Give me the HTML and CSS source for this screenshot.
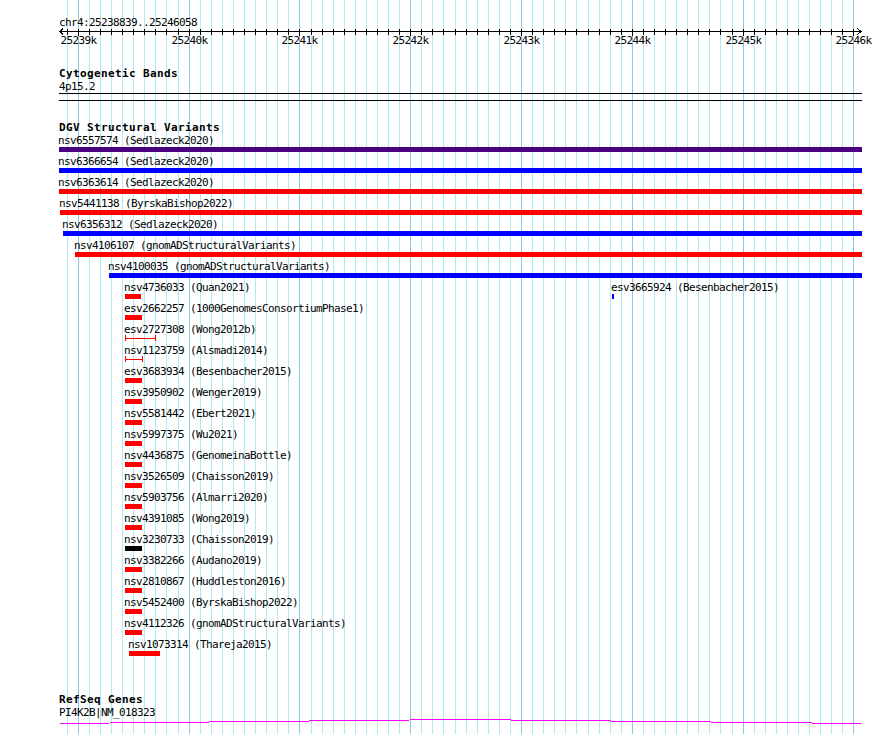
FILE: index.html
```html
<!DOCTYPE html>
<html lang="en">
<head>
    <meta charset="UTF-8">
    <title>chr4:25238839..25246058</title>
    <link rel="stylesheet" href="styles.css">
</head>
<body>

<div class="browser">
    <svg class="grid" width="890" height="734"></svg>

    <div class="track ruler">
        <div class="ruler-pos">chr4:25238839..25246058</div>
        <svg class="scale" width="803" height="18">
            <line x1="1" y1="2.5" x2="802" y2="2.5"/>
            <polyline points="4,-0.5 1,2.5 4,5.5"/>
            <polyline points="798,-1 802,2.5 798,6"/>
            <g class="ticks"></g>
        </svg>
    </div>

    <div class="track cytoband">
        <h2 class="track-title">Cytogenetic Bands</h2>
        <div class="band-name">4p15.2</div>
        <div class="band"></div>
    </div>

    <div class="track dgv">
        <h2 class="track-title">DGV Structural Variants</h2>

        <div class="row">
            <div class="feat" style="left:0;width:803px"><div class="feat-name">nsv6557574 (Sedlazeck2020)</div><div class="bar indigo"></div></div>
        </div>
        <div class="row">
            <div class="feat" style="left:0;width:803px"><div class="feat-name">nsv6366654 (Sedlazeck2020)</div><div class="bar blue"></div></div>
        </div>
        <div class="row">
            <div class="feat" style="left:0;width:803px"><div class="feat-name">nsv6363614 (Sedlazeck2020)</div><div class="bar red"></div></div>
        </div>
        <div class="row">
            <div class="feat" style="left:1px;width:802px"><div class="feat-name">nsv5441138 (ByrskaBishop2022)</div><div class="bar red"></div></div>
        </div>
        <div class="row">
            <div class="feat" style="left:4px;width:799px"><div class="feat-name">nsv6356312 (Sedlazeck2020)</div><div class="bar blue"></div></div>
        </div>
        <div class="row">
            <div class="feat" style="left:16px;width:787px"><div class="feat-name">nsv4106107 (gnomADStructuralVariants)</div><div class="bar red"></div></div>
        </div>
        <div class="row">
            <div class="feat" style="left:50px;width:753px"><div class="feat-name">nsv4100035 (gnomADStructuralVariants)</div><div class="bar blue"></div></div>
        </div>
        <div class="row">
            <div class="feat" style="left:66px;width:16px"><div class="feat-name">nsv4736033 (Quan2021)</div><div class="bar red"></div></div>
            <div class="feat" style="left:553px;width:2px"><div class="feat-name">esv3665924 (Besenbacher2015)</div><div class="bar blue"></div></div>
        </div>
        <div class="row">
            <div class="feat" style="left:66px;width:17px"><div class="feat-name">esv2662257 (1000GenomesConsortiumPhase1)</div><div class="bar red"></div></div>
        </div>
        <div class="row">
            <div class="feat" style="left:66px;width:31px"><div class="feat-name">esv2727308 (Wong2012b)</div><div class="span"></div></div>
        </div>
        <div class="row">
            <div class="feat" style="left:66px;width:18px"><div class="feat-name">nsv1123759 (Alsmadi2014)</div><div class="span"></div></div>
        </div>
        <div class="row">
            <div class="feat" style="left:66px;width:17px"><div class="feat-name">esv3683934 (Besenbacher2015)</div><div class="bar red"></div></div>
        </div>
        <div class="row">
            <div class="feat" style="left:66px;width:17px"><div class="feat-name">nsv3950902 (Wenger2019)</div><div class="bar red"></div></div>
        </div>
        <div class="row">
            <div class="feat" style="left:66px;width:17px"><div class="feat-name">nsv5581442 (Ebert2021)</div><div class="bar red"></div></div>
        </div>
        <div class="row">
            <div class="feat" style="left:66px;width:17px"><div class="feat-name">nsv5997375 (Wu2021)</div><div class="bar red"></div></div>
        </div>
        <div class="row">
            <div class="feat" style="left:66px;width:17px"><div class="feat-name">nsv4436875 (GenomeinaBottle)</div><div class="bar red"></div></div>
        </div>
        <div class="row">
            <div class="feat" style="left:66px;width:17px"><div class="feat-name">nsv3526509 (Chaisson2019)</div><div class="bar red"></div></div>
        </div>
        <div class="row">
            <div class="feat" style="left:66px;width:17px"><div class="feat-name">nsv5903756 (Almarri2020)</div><div class="bar red"></div></div>
        </div>
        <div class="row">
            <div class="feat" style="left:66px;width:17px"><div class="feat-name">nsv4391085 (Wong2019)</div><div class="bar red"></div></div>
        </div>
        <div class="row">
            <div class="feat" style="left:66px;width:17px"><div class="feat-name">nsv3230733 (Chaisson2019)</div><div class="bar black"></div></div>
        </div>
        <div class="row">
            <div class="feat" style="left:66px;width:17px"><div class="feat-name">nsv3382266 (Audano2019)</div><div class="bar red"></div></div>
        </div>
        <div class="row">
            <div class="feat" style="left:66px;width:17px"><div class="feat-name">nsv2810867 (Huddleston2016)</div><div class="bar red"></div></div>
        </div>
        <div class="row">
            <div class="feat" style="left:66px;width:17px"><div class="feat-name">nsv5452400 (ByrskaBishop2022)</div><div class="bar red"></div></div>
        </div>
        <div class="row">
            <div class="feat" style="left:66px;width:17px"><div class="feat-name">nsv4112326 (gnomADStructuralVariants)</div><div class="bar red"></div></div>
        </div>
        <div class="row">
            <div class="feat" style="left:70px;width:31px"><div class="feat-name">nsv1073314 (Thareja2015)</div><div class="bar red"></div></div>
        </div>
    </div>

    <div class="track refseq">
        <h2 class="track-title">RefSeq Genes</h2>
        <div class="band-name">PI4K2B|NM_018323</div>
        <svg class="intron" width="803" height="5">
            <polyline points="1,4.5 401,0.5 802,4.5"/>
        </svg>
    </div>
</div>

<script src="script.js"></script>
</body>
</html>
```

FILE: styles.css
```css
* { margin: 0; padding: 0; box-sizing: border-box; }
body {
    background: #fff; color: #000;
    font: 11px/13px 'DejaVu Sans Mono', monospace;
    letter-spacing: -0.62px;
}
.browser { position: relative; width: 890px; height: 734px; padding-left: 59px; overflow: hidden; }

/* background grid, one line per 100 bp */
.grid { position: absolute; left: 0; top: 0; shape-rendering: crispEdges; }
.grid .minor { stroke: #aeeaf0; }
.grid .major { stroke: #8ec8e8; }

.track { position: relative; z-index: 1; width: 803px; }
.track-title { font-size: 11px; font-weight: bold; letter-spacing: 0.38px; line-height: 12px; }

.ruler { padding-top: 16px; }
.scale { display: block; overflow: visible; shape-rendering: crispEdges; }
.scale line, .scale polyline { stroke: #000; fill: none; }
.scale text { font: inherit; letter-spacing: inherit; text-anchor: middle; fill: #000; stroke: none; }

.cytoband { margin-top: 20px; }
.cytoband .track-title { line-height: 13px; }
.band { height: 8px; border-top: 1px solid #000; border-bottom: 1px solid #000; }

.dgv { margin-top: 21px; }
.row { position: relative; height: 21px; }
.feat { position: absolute; top: 0; }
.feat-name { margin-left: -1px; white-space: nowrap; }
.bar { height: 5px; }
.bar.red { background: #f00; }
.bar.blue { background: #00f; }
.bar.indigo { background: #4b0082; }
.bar.black { background: #000; }
.span {
    height: 6px; margin-top: -1px;
    border-left: 1px solid #f00; border-right: 1px solid #f00;
    background: linear-gradient(#f00, #f00) 0 3px / 100% 1px no-repeat;
}

.refseq { margin-top: 35px; }
.intron { display: block; overflow: visible; shape-rendering: crispEdges; }
.intron polyline { stroke: #f0f; fill: none; }
```

FILE: script.js
```js
// grid lines and ruler ticks, one every 100 bp across the view
const START = 25238839;
const END = 25246058;
const PAD = 60;        // first pixel of the track
const WIDTH = 800;     // pixels for the whole range
const TRACK_LEFT = 59; // left edge of the track boxes
const SVG_NS = 'http://www.w3.org/2000/svg';

function bpToX(bp) {
    return Math.round(PAD + (bp - START) * WIDTH / (END - START + 1));
}

function svgEl(tag, attrs, parent) {
    const node = document.createElementNS(SVG_NS, tag);
    for (const key in attrs) node.setAttribute(key, attrs[key]);
    parent.appendChild(node);
    return node;
}

const grid = document.querySelector('.grid');
const ticks = document.querySelector('.scale .ticks');

for (let bp = Math.ceil(START / 100) * 100; bp <= END; bp += 100) {
    const x = bpToX(bp);
    const major = bp % 1000 === 0;
    svgEl('line', { x1: x + 0.5, y1: 0, x2: x + 0.5, y2: 734, class: major ? 'major' : 'minor' }, grid);

    const tx = x - TRACK_LEFT + 0.5;
    svgEl('line', { x1: tx, y1: 0, x2: tx, y2: major ? 7 : 6 }, ticks);
    if (major) {
        const label = svgEl('text', { x: tx, y: 15 }, ticks);
        label.textContent = (bp / 1000) + 'k';
    }
}
```
